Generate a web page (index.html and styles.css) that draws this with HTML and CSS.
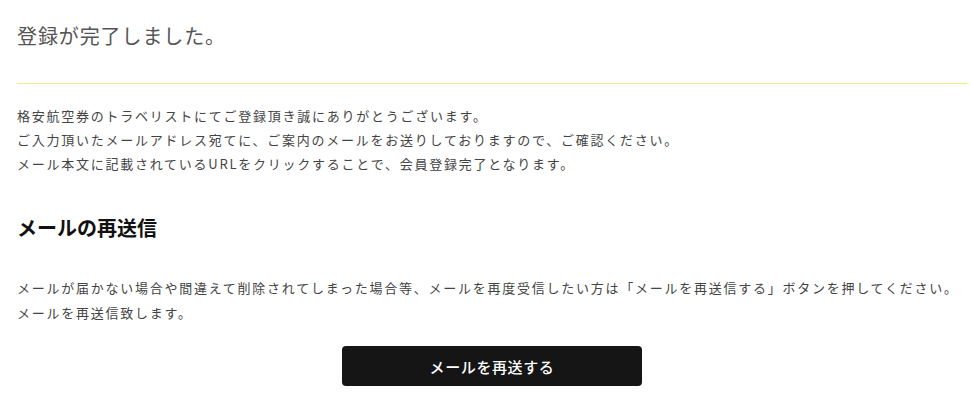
FILE: index.html
```html
<!DOCTYPE html>
<html lang="ja">
<head>
<meta charset="utf-8">
<title>登録が完了しました。</title>
<link rel="stylesheet" href="styles.css">
</head>
<body>
<main class="page">
  <header class="page-head">
    <h1 class="page-title">登録が完了しました。</h1>
  </header>
  <p class="text intro">格安航空券のトラベリストにてご登録頂き誠にありがとうございます。<br>ご入力頂いたメールアドレス宛てに、ご案内のメールをお送りしておりますので、ご確認ください。<br>メール本文に記載されているURLをクリックすることで、会員登録完了となります。</p>
  <section class="resend">
    <h2 class="section-title">メールの再送信</h2>
    <p class="text">メールが届かない場合や間違えて削除されてしまった場合等、メールを再度受信したい方は「メールを再送信する」ボタンを押してください。<br>メールを再送信致します。</p>
    <div class="actions">
      <button type="button" class="btn">メールを再送する</button>
    </div>
  </section>
</main>
</body>
</html>
```

FILE: styles.css
```css
* { box-sizing: border-box; }
html, body { margin: 0; padding: 0; background: #fff; }
body {
  font-family: "Noto Sans CJK JP", "Noto Sans", sans-serif;
  color: #444;
}
.page {
  width: 950px;
  margin-left: 17px;
}
.page-head {
  padding-top: 21px;
  padding-bottom: 32px;
  border-bottom: 1px solid #fbe88c;
}
.page-title {
  margin: 0;
  font-size: 20px;
  line-height: 30px;
  font-weight: 400;
  letter-spacing: 0.9px;
  color: #555;
}
.text {
  margin: 0;
  font-size: 13px;
  line-height: 24px;
  letter-spacing: 1.75px;
  color: #444;
}
.intro { margin-top: 20px; }
.section-title {
  margin: 37px 0 0;
  font-size: 20px;
  line-height: 30px;
  font-weight: 700;
  color: #111;
}
.resend .text { margin-top: 32px; line-height: 25px; }
.actions {
  display: flex;
  justify-content: center;
  margin-top: 21px;
}
.btn {
  width: 300px;
  height: 40px;
  border: 0;
  border-radius: 4px;
  background: #151515;
  color: #fff;
  font-family: "Noto Sans CJK JP", "Noto Sans", sans-serif;
  font-size: 15px;
  font-weight: 500;
  letter-spacing: 0.6px;
  cursor: pointer;
}
```
